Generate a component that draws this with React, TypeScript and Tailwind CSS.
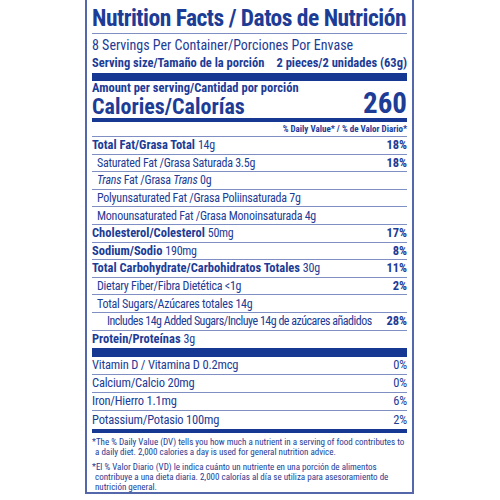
type Row = {
  bold?: string
  text: React.ReactNode
  dv?: string
  indent?: 0 | 1 | 2
}

const rows: Row[] = [
  { bold: 'Total Fat/Grasa Total', text: '14g', dv: '18%' },
  { text: 'Saturated Fat /Grasa Saturada 3.5g', dv: '18%', indent: 1 },
  {
    text: (
      <>
        <i>Trans</i> Fat /Grasa <i>Trans</i> 0g
      </>
    ),
    indent: 1,
  },
  { text: 'Polyunsaturated Fat /Grasa Poliinsaturada 7g', indent: 1 },
  { text: 'Monounsaturated Fat /Grasa Monoinsaturada 4g', indent: 1 },
  { bold: 'Cholesterol/Colesterol', text: '50mg', dv: '17%' },
  { bold: 'Sodium/Sodio', text: '190mg', dv: '8%' },
  { bold: 'Total Carbohydrate/Carbohidratos Totales', text: '30g', dv: '11%' },
  { text: 'Dietary Fiber/Fibra Dietética <1g', dv: '2%', indent: 1 },
  { text: 'Total Sugars/Azúcares totales 14g', indent: 1 },
  { text: 'Includes 14g Added Sugars/Incluye 14g de azúcares añadidos', dv: '28%', indent: 2 },
  { bold: 'Protein/Proteínas', text: '3g' },
]

const vitamins = [
  ['Vitamin D / Vitamina D 0.2mcg', '0%'],
  ['Calcium/Calcio 20mg', '0%'],
  ['Iron/Hierro 1.1mg', '6%'],
  ['Potassium/Potasio 100mg', '2%'],
]

export default function App() {
  return (
    <div className="min-h-screen bg-white font-['Roboto_Condensed',sans-serif] text-[#1d3c96]">
      <div className="ml-[85px] w-[329px] border-x-2 border-b-2 border-[#5467aa] px-[5px]">
        {/* header */}
        <h1 className="border-b border-[#7f8fc4] pt-[3px] text-[23.5px] font-bold leading-[30px] tracking-[-0.5px] whitespace-nowrap">
          Nutrition Facts / Datos de Nutrición
        </h1>
        <p className="pt-[2px] text-[14px] leading-[18px]">8 Servings Per Container/Porciones Por Envase</p>
        <div className="flex justify-between whitespace-nowrap text-[12.5px] font-bold leading-[18px]">
          <span>Serving size/Tamaño de la porción</span>
          <span>2 pieces/2 unidades (63g)</span>
        </div>
        <div className="mt-[1px] h-[8px] bg-[#173892]" />

        {/* calories */}
        <p className="pt-[1px] text-[12.5px] font-bold leading-[12px]">Amount per serving/Cantidad por porción</p>
        <div className="mt-[2px] flex h-[21px] items-center justify-between font-bold">
          <span className="text-[22px] leading-[21px]">Calories/Calorías</span>
          <span className="mb-[6px] text-[29px] leading-[21px]">260</span>
        </div>
        <div className="mt-[1px] h-[4px] bg-[#173892]" />
        <p className="border-b border-[#7f8fc4] text-right text-[9px] font-bold leading-[14px]">
          % Daily Value* / % de Valor Diario*
        </p>

        {/* nutrients */}
        {rows.map((r, i) => (
          <div
            key={i}
            className={
              'flex h-[17.6px] items-center justify-between whitespace-nowrap text-[12px] leading-none ' +
              (r.indent === 2 ? 'tracking-[-0.5px] ' : 'tracking-[-0.25px] ') +
              (i < rows.length - 1 ? 'border-b border-[#7f8fc4]' : '')
            }
          >
            <span className={r.indent === 2 ? 'pl-[15px]' : r.indent === 1 ? 'pl-[5px]' : ''}>
              {r.bold && <b className="text-[12.5px] tracking-normal">{r.bold} </b>}
              {r.text}
            </span>
            {r.dv && <b className="text-[12.5px] tracking-normal">{r.dv}</b>}
          </div>
        ))}
        <div className="h-[9px] bg-[#173892]" />

        {/* vitamins */}
        {vitamins.map(([name, dv], i) => (
          <div
            key={name}
            className={
              'flex h-[18px] items-center justify-between text-[12.5px] leading-none tracking-[-0.2px] ' +
              (i < vitamins.length - 1 ? 'border-b border-[#7f8fc4]' : '')
            }
          >
            <span>{name}</span>
            <span>{dv}</span>
          </div>
        ))}
        <div className="h-[4px] bg-[#173892]" />

        {/* footnotes */}
        <div className="pt-[4px] text-[9px] leading-[10px] whitespace-nowrap">
          <p className="pl-[3px] -indent-[3px]">
            *The % Daily Value (DV) tells you how much a nutrient in a serving of food contributes to
            <br />a daily diet. 2,000 calories a day is used for general nutrition advice.
          </p>
          <p className="mt-[5px] pl-[3px] -indent-[3px]">
            *El % Valor Diario (VD) le indica cuánto un nutriente en una porción de alimentos
            <br />
            contribuye a una dieta diaria. 2,000 calorías al día se utiliza para asesoramiento de
            <br />
            nutrición general.
          </p>
        </div>
      </div>
    </div>
  )
}
